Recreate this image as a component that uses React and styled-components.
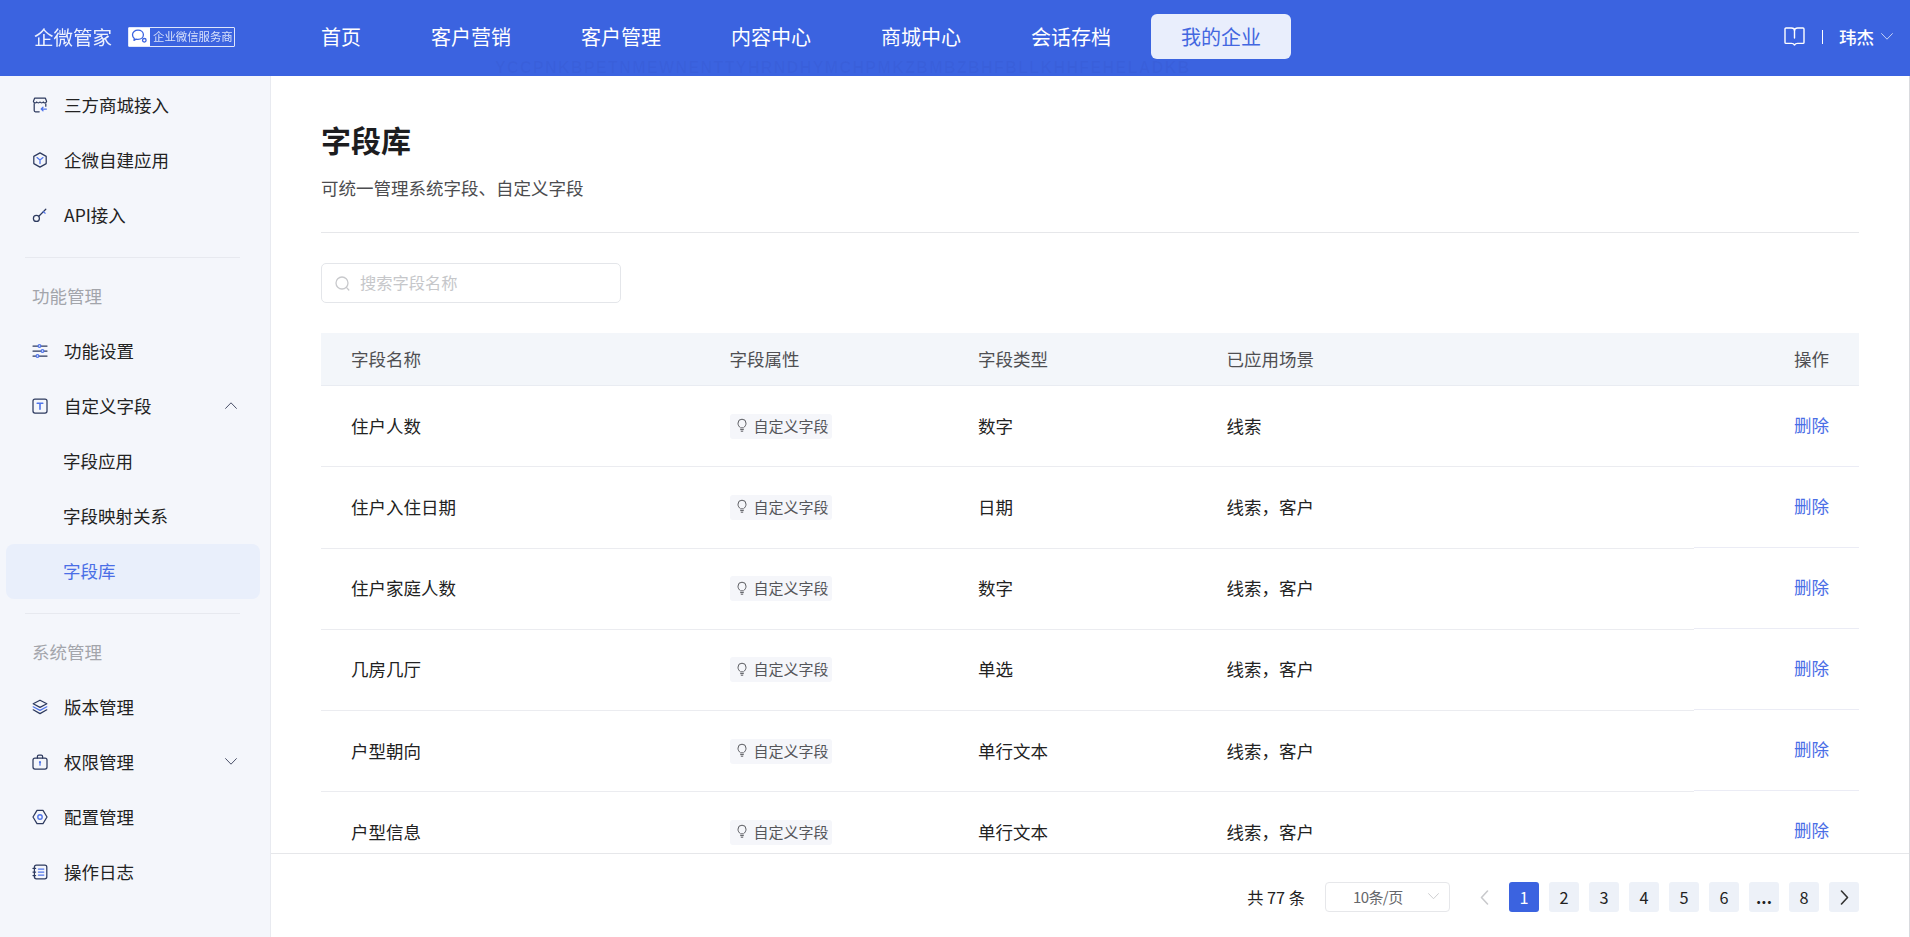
import React from 'react';
import styled, { createGlobalStyle } from 'styled-components';

const Global = createGlobalStyle`
  html, body { margin: 0; padding: 0; height: 100%; overflow: hidden; background: #fff; }
  * { box-sizing: border-box; }
  body { font-family: "Noto Sans CJK SC", "Noto Sans", sans-serif; color: #222; }
`;

const Page = styled.div`
  height: 937px; display: flex; flex-direction: column; overflow: hidden;
`;
const Header = styled.header`
  height: 76px; flex: none; background: #3b63e0; display: flex; align-items: center;
  padding: 0 17px 3px 34px; position: relative; overflow: hidden;
`;
const Logo = styled.div`
  width: 257px; flex: none; display: flex; align-items: center; gap: 17px; color: #eef2fd;
`;
const LogoName = styled.span`
  font-size: 19.5px; line-height: 28px; white-space: nowrap; width: 77px; filter: blur(0.3px);
`;
const LogoBadge = styled.span`
  display: flex; align-items: stretch; height: 20px; width: 107px; border: 1px solid #dfe6fb; border-radius: 1px;
`;
const LogoBadgeIcon = styled.span`
  width: 21px; background: #fff; display: flex; align-items: center; justify-content: center; flex: none;
`;
const LogoBadgeText = styled.span`
  font-size: 11.4px; line-height: 17px; white-space: nowrap; padding-left: 3px; color: #d8e1fa; filter: blur(0.3px);
`;
const Nav = styled.nav`
  display: flex; align-items: center; gap: 10px;
`;
const NavItem = styled.a`
  height: 45px; padding: 0 30px 1px; display: flex; align-items: center; font-size: 20px; border-radius: 6px; white-space: nowrap;
  color: ${p => (p.$active ? '#4367e0' : '#fff')};
  background: ${p => (p.$active ? '#e9eefc' : 'transparent')};
`;
const Watermark = styled.span`
  position: absolute; left: 495px; top: 60px; font-family: "Liberation Sans", sans-serif; font-size: 16px; line-height: 16px; font-weight: 700;
  color: rgba(30, 50, 130, 0.06); white-space: nowrap; letter-spacing: 1.4px;
`;
const UserArea = styled.div`
  margin-left: auto; display: flex; align-items: center; color: #fff;
`;
const Sep = styled.span`
  width: 1px; height: 14px; background: #fff; margin: 0 16px 0 17px;
`;
const UserName = styled.span`
  font-size: 17.5px; font-weight: 500; margin-right: 7px; line-height: 24px;
`;

const Body = styled.div`
  flex: 1; display: flex; min-height: 0;
`;
const Sidebar = styled.aside`
  width: 271px; flex: none; background: #f4f6fb; border-right: 1px solid #e8eaf0; padding-top: 2px; overflow: hidden;
`;
const MenuItem = styled.div`
  height: 55px; margin: 0 10px 0 6px; padding: 0 23px 2px 26px; display: flex; align-items: center; font-size: 17.5px; border-radius: 8px;
  color: ${p => (p.$active ? '#4a6ee6' : '#222')};
  background: ${p => (p.$active ? '#e9effb' : 'transparent')};
`;
const SubItem = styled(MenuItem)`
  padding-left: 57px;
`;
const MenuIcon = styled.span`
  width: 16px; height: 16px; margin-right: 16px; display: flex; flex: none;
`;
const MenuChevron = styled.span`
  margin-left: auto; display: flex;
`;
const Divider = styled.div`
  height: 1px; background: #e7e9ef; margin: 14px 30px 11px 25px;
`;
const SectionTitle = styled.div`
  height: 55px; display: flex; align-items: center; padding: 0 0 2px 32px; font-size: 17.5px; color: #a3a5ab;
`;

const Main = styled.main`
  flex: 1; min-width: 0; display: flex; flex-direction: column; border-right: 1px solid #d9dade;
`;
const Scroll = styled.div`
  flex: 1; min-height: 0; overflow: hidden; padding: 44px 50px 0;
`;
const Title = styled.h1`
  margin: 0; font-size: 30px; line-height: 38px; font-weight: 700; color: #1d1d1f;
`;
const Subtitle = styled.p`
  margin: 18px 0 0; font-size: 17.5px; line-height: 24px; color: #4c4c4f; padding-bottom: 32px; border-bottom: 1px solid #e6e7ea;
`;
const Search = styled.div`
  margin-top: 30px; width: 300px; height: 40px; border: 1px solid #e4e6ea; border-radius: 5px; display: flex; align-items: center; padding: 0 13px;
`;
const Placeholder = styled.span`
  margin-left: 10px; padding-bottom: 2px; font-size: 16.25px; color: #c6c7ca; line-height: 24px;
`;
const cols = '378.5px 248.5px 248.5px 1fr 165px';
const HeadRow = styled.div`
  margin-top: 30px; height: 53px; padding-bottom: 1px; background: #f3f6fa; border-bottom: 1px solid #e9ecf2; display: grid; grid-template-columns: ${cols}; align-items: center;
  font-size: 17.5px; color: #4f4f52;
`;
const HeadCell = styled.div`
  padding-left: 30px;
  text-align: ${p => (p.$right ? 'right' : 'left')};
  padding-right: ${p => (p.$right ? '30px' : '0')};
`;
const TableBody = styled.div`
  display: flex; align-items: flex-start;
`;
const RowsColumn = styled.div`
  flex: 1; min-width: 0;
`;
const Row = styled.div`
  height: 81.25px; border-bottom: 1px solid #ebecf0; display: grid; grid-template-columns: 378.5px 248.5px 248.5px 1fr; align-items: center;
  font-size: 17.5px; color: #222;
`;
const Cell = styled.div`
  padding: 0 0 2px 30px;
`;
const TagCell = styled.div`
  padding-left: 30px;
`;
const Tag = styled.span`
  display: inline-flex; vertical-align: top; align-items: center; height: 25px; width: 102px; padding: 0 0 2px 7px; background: #f5f6fa; border-radius: 3px;
  font-size: 15px; color: #55565a;
`;
const TagIcon = styled.span`
  display: flex; margin-right: 7px;
`;
const FixedColumn = styled.div`
  width: 165px; flex: none;
`;
const FixedCell = styled.div`
  height: 81.1px; border-bottom: 1px solid #ebecf5; display: flex; align-items: center; justify-content: flex-end; padding: 0 30px 4px 0;
  font-size: 17.5px; color: #4a6ee6;
`;
const Footer = styled.footer`
  height: 84px; flex: none; border-top: 1px solid #e6e7ea; padding: 28px 50px 0; display: flex; justify-content: flex-end; align-items: flex-start;
`;
const Total = styled.span`
  font-size: 16.25px; line-height: 30px; margin-right: 20px; color: #222; white-space: nowrap;
`;
const PageSize = styled.div`
  width: 125px; height: 30px; border: 1px solid #e6e7ea; border-radius: 4px; display: flex; align-items: center; justify-content: space-between;
  padding: 0 10px 1px 27px; font-size: 15px; letter-spacing: -0.6px; color: #66676b; margin-right: 19px;
`;
const Pager = styled.div`
  display: flex; gap: 10px;
`;
const PageButton = styled.span`
  width: 30px; height: 30px; border-radius: 3px; display: flex; align-items: center; justify-content: center; font-size: 16.25px;
  color: ${p => (p.$active ? '#fff' : '#222')};
  font-weight: ${p => (p.$bold ? 700 : 400)};
  background: ${p => (p.$active ? '#3b63e0' : p.$plain ? 'transparent' : '#edf1f8')};
`;

const D = '#2d3a5f';
const B = '#4f74ea';
const Svg = ({ children }) => (
  <svg width={16} height={16} viewBox="0 0 16 16" fill="none" strokeWidth="1.25" strokeLinecap="round" strokeLinejoin="round">{children}</svg>
);
const IconStore = () => (
  <Svg>
    <path d="M2.600 1.200h10.800l1.200 3.200a1.800 1.800 0 0 1-3.300.6 2 2 0 0 1-3.300 0 2 2 0 0 1-3.300 0 1.800 1.800 0 0 1-3.300-.6z" stroke={D} />
    <path d="M2.200 6.600v7a1.200 1.200 0 0 0 1.200 1.200h3.800M13.800 6.800v2.400" stroke={D} />
    <path d="M14.400 12H9.200m1.800-1.800L9.200 12l1.800 1.800" stroke={B} />
  </Svg>
);
const IconHex = () => (
  <Svg>
    <path d="M8 .9l6.200 3.500v7.200L8 15.100 1.800 11.600V4.400z" stroke={D} />
    <path d="M5 5.600L8 8l3-2.400M8 8v3.600" stroke={B} />
  </Svg>
);
const IconKey = () => (
  <Svg>
    <circle cx="4.400" cy="11.400" r="3" stroke={D} />
    <path d="M6.800 9.200l7-7" stroke={D} />
    <path d="M11.200 4.800l2 1.400" stroke={B} />
  </Svg>
);
const IconSliders = () => (
  <Svg>
    <path d="M1 3h5M9 3h6M1 8h8M12 8h3M1 13h3M7 13h8" stroke={D} />
    <circle cx="7.500" cy="3" r="1.400" stroke={B} />
    <circle cx="10.500" cy="8" r="1.400" stroke={B} />
    <circle cx="5.500" cy="13" r="1.400" stroke={B} />
  </Svg>
);
const IconT = () => (
  <Svg>
    <rect x="1" y="1" width="14" height="14" rx="2" stroke={D} />
    <path d="M5.200 5.200h5.600M8 5.200v6" stroke={B} strokeWidth="1.600" />
  </Svg>
);
const IconLayers = () => (
  <Svg>
    <path d="M8 1.200l6.800 3.600L8 8.400 1.200 4.800z" stroke={D} />
    <path d="M1.200 7.800L8 11.400l6.800-3.600" stroke={B} />
    <path d="M1.200 10.800L8 14.600l6.800-3.800" stroke={D} />
  </Svg>
);
const IconBag = () => (
  <Svg>
    <rect x="1" y="4" width="14" height="11" rx="2" stroke={D} />
    <path d="M5.400 4V2.600A1.400 1.400 0 0 1 6.800 1.200h2.400a1.400 1.400 0 0 1 1.400 1.400V4" stroke={D} />
    <circle cx="8" cy="8.200" r="1.100" fill={B} />
    <path d="M8 8.600v2.600" stroke={B} />
  </Svg>
);
const IconGear = () => (
  <Svg>
    <path d="M5 1.400h6L15 8l-4 6.600H5L1 8z" stroke={D} />
    <circle cx="8" cy="8" r="2.200" stroke={B} strokeWidth="1.400" />
  </Svg>
);
const IconLog = () => (
  <Svg>
    <rect x="2.400" y="1.200" width="12.400" height="13.600" rx="2" stroke={D} />
    <path d="M1 4.400h2.600M1 8h2.600M1 11.600h2.600" stroke={D} />
    <path d="M6.400 5h5.400M6.400 8h5.400M6.400 11h5.400" stroke={B} />
  </Svg>
);
const Chevron = ({ up, color = '#4a5068', w = 12 }) => (
  <svg width={w} height={w / 2 + 1} viewBox="0 0 12 7" fill="none" stroke={color} strokeWidth="1" strokeLinecap="round" strokeLinejoin="round">
    <path d={up ? 'M.6 6.400L6 .8l5.400 5.600' : 'M.6.6L6 6.200 11.400.6'} />
  </svg>
);
const Arrow = ({ left, color }) => (
  <svg width="9" height="15" viewBox="0 0 9 15" fill="none" stroke={color} strokeWidth="1.600" strokeLinecap="round" strokeLinejoin="round">
    <path d={left ? 'M7.500 1L1.500 7.500l6 6.500' : 'M1.500 1l6 6.500-6 6.500'} />
  </svg>
);
const Bulb = () => (
  <svg width="10" height="14" viewBox="0 0 10 14" fill="none" stroke="#5a5b60" strokeWidth="1" strokeLinecap="round" strokeLinejoin="round">
    <path d="M3.200 9.600C2 8.600 1 7.200 1 5.200a4 4 0 0 1 8 0c0 2-1 3.400-2.200 4.400z" />
    <path d="M3.600 11.600h2.800M4.200 13.200h1.600" />
  </svg>
);
const SearchIcon = () => (
  <svg width="15" height="15" viewBox="0 0 15 15" fill="none" stroke="#c8c9cc" strokeWidth="1.300" strokeLinecap="round">
    <circle cx="7" cy="7" r="6" />
    <path d="M11.400 11.400l2.400 2.600" />
  </svg>
);
const BookIcon = () => (
  <svg width="21" height="19" viewBox="0 0 21 19" fill="none" stroke="#fff" strokeWidth="1.400" strokeLinecap="round" strokeLinejoin="round" style={{ display: 'block' }}>
    <path d="M2 1h5.400c1.700 0 3.100.7 3.100 2.400C10.500 1.700 11.900 1 13.600 1H19a1 1 0 0 1 1 1v13.400a1 1 0 0 1-1 1h-5.500c-1.400 0-2.300.5-3 1.600-.7-1.100-1.600-1.600-3-1.600H2a1 1 0 0 1-1-1V2a1 1 0 0 1 1-1z" />
    <path d="M10.500 3.400v7.600" />
  </svg>
);
const WechatMark = () => (
  <svg width="17" height="15" viewBox="0 0 17 15" fill="none" stroke="#3b63e0" strokeWidth="1.300" strokeLinecap="round" strokeLinejoin="round">
    <path d="M7 1.200c3.100 0 5.400 2 5.400 4.600S10.100 10.400 7 10.400c-.7 0-1.400-.1-2-.3L3 11.400l.3-2C2.100 8.500 1.500 7.200 1.500 5.800 1.500 3.200 3.900 1.200 7 1.200z" />
    <circle cx="13.300" cy="11.300" r="1.800" />
  </svg>
);

const rows = [
  ['住户人数', '数字', '线索'],
  ['住户入住日期', '日期', '线索，客户'],
  ['住户家庭人数', '数字', '线索，客户'],
  ['几房几厅', '单选', '线索，客户'],
  ['户型朝向', '单行文本', '线索，客户'],
  ['户型信息', '单行文本', '线索，客户'],
];
const navs = ['首页', '客户营销', '客户管理', '内容中心', '商城中心', '会话存档', '我的企业'];

export default function App() {
  return (
    <Page>
      <Global />
      <Header>
        <Watermark>YCCPNKBPETNMEWNENTTYHRNDHYMCHPMKZBMBZBHFBLLKHHFEHELADKB</Watermark>
        <Logo>
          <LogoName>企微管家</LogoName>
          <LogoBadge>
            <LogoBadgeIcon><WechatMark /></LogoBadgeIcon>
            <LogoBadgeText>企业微信服务商</LogoBadgeText>
          </LogoBadge>
        </Logo>
        <Nav>
          {navs.map(n => <NavItem key={n} $active={n === '我的企业'}>{n}</NavItem>)}
        </Nav>
        <UserArea>
          <BookIcon />
          <Sep />
          <UserName>玮杰</UserName>
          <Chevron color="#c5d2f6" />
        </UserArea>
      </Header>
      <Body>
        <Sidebar>
          <MenuItem><MenuIcon><IconStore /></MenuIcon>三方商城接入</MenuItem>
          <MenuItem><MenuIcon><IconHex /></MenuIcon>企微自建应用</MenuItem>
          <MenuItem><MenuIcon><IconKey /></MenuIcon>API接入</MenuItem>
          <Divider />
          <SectionTitle>功能管理</SectionTitle>
          <MenuItem><MenuIcon><IconSliders /></MenuIcon>功能设置</MenuItem>
          <MenuItem><MenuIcon><IconT /></MenuIcon>自定义字段<MenuChevron><Chevron up /></MenuChevron></MenuItem>
          <SubItem>字段应用</SubItem>
          <SubItem>字段映射关系</SubItem>
          <SubItem $active>字段库</SubItem>
          <Divider />
          <SectionTitle>系统管理</SectionTitle>
          <MenuItem><MenuIcon><IconLayers /></MenuIcon>版本管理</MenuItem>
          <MenuItem><MenuIcon><IconBag /></MenuIcon>权限管理<MenuChevron><Chevron /></MenuChevron></MenuItem>
          <MenuItem><MenuIcon><IconGear /></MenuIcon>配置管理</MenuItem>
          <MenuItem><MenuIcon><IconLog /></MenuIcon>操作日志</MenuItem>
        </Sidebar>
        <Main>
          <Scroll>
            <Title>字段库</Title>
            <Subtitle>可统一管理系统字段、自定义字段</Subtitle>
            <Search><SearchIcon /><Placeholder>搜索字段名称</Placeholder></Search>
            <HeadRow>
              <HeadCell>字段名称</HeadCell>
              <HeadCell>字段属性</HeadCell>
              <HeadCell>字段类型</HeadCell>
              <HeadCell>已应用场景</HeadCell>
              <HeadCell $right>操作</HeadCell>
            </HeadRow>
            <TableBody>
              <RowsColumn>
                {rows.map(r => (
                  <Row key={r[0]}>
                    <Cell>{r[0]}</Cell>
                    <TagCell><Tag><TagIcon><Bulb /></TagIcon>自定义字段</Tag></TagCell>
                    <Cell>{r[1]}</Cell>
                    <Cell>{r[2]}</Cell>
                  </Row>
                ))}
              </RowsColumn>
              <FixedColumn>
                {rows.map(r => <FixedCell key={r[0]}>删除</FixedCell>)}
              </FixedColumn>
            </TableBody>
          </Scroll>
          <Footer>
            <Total>共 77 条</Total>
            <PageSize>10条/页<Chevron color="#c9cacd" w={11} /></PageSize>
            <Pager>
              <PageButton $plain><Arrow left color="#c9cacd" /></PageButton>
              <PageButton $active>1</PageButton>
              {['2', '3', '4', '5', '6'].map(n => <PageButton key={n}>{n}</PageButton>)}
              <PageButton $bold>...</PageButton>
              <PageButton>8</PageButton>
              <PageButton><Arrow color="#333" /></PageButton>
            </Pager>
          </Footer>
        </Main>
      </Body>
    </Page>
  );
}
